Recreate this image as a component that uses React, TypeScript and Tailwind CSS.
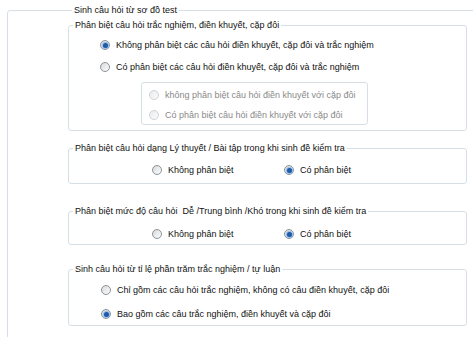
import React from 'react';

type RadioProps = { checked?: boolean; disabled?: boolean };

const Radio: React.FC<RadioProps> = ({ checked, disabled }) => {
  if (disabled) {
    return (
      <span className="w-[10px] h-[10px] shrink-0 rounded-full border border-[#cfd3d6] bg-gradient-to-br from-[#e9ebed] to-[#fbfbfb]" />
    );
  }
  return (
    <span className="w-[10px] h-[10px] shrink-0 rounded-full border border-[#8e9396] bg-gradient-to-br from-[#d6d9dc] to-[#fdfdfd] flex items-center justify-center">
      {checked && <span className="w-[5px] h-[5px] rounded-full bg-[#1d5aa8] shadow-[0_0_1px_1px_rgba(120,170,230,0.8)]" />}
    </span>
  );
};

const Option: React.FC<RadioProps & { label: string; className?: string }> = ({ label, checked, disabled, className }) => (
  <div className={`flex items-center gap-[6px] h-[12px] ${className ?? ''}`}>
    <Radio checked={checked} disabled={disabled} />
    <span className={`whitespace-pre ${disabled ? 'text-[#8a8a8a]' : 'text-[#111]'}`}>{label}</span>
  </div>
);

const Group: React.FC<{ title: string; className?: string; children: React.ReactNode }> = ({ title, className, children }) => (
  <fieldset className={`w-[399px] border border-[#d5dfe5] rounded-[3px] ${className ?? ''}`}>
    <legend className="ml-[4px] px-[2px] whitespace-pre text-[#111]">{title}</legend>
    {children}
  </fieldset>
);

export default function App() {
  return (
    <div
      className="w-[473px] h-[337px] overflow-hidden bg-white text-[9px] leading-[12px]"
      style={{ fontFamily: '"Liberation Sans", Arial, sans-serif' }}
    >
      <fieldset className="ml-[7px] mt-[4px] w-[475px] h-[345px] border border-[#d5dfe5] rounded-[3px] pl-[60px]">
        <legend className="ml-[4px] px-[2px] text-[#111]">Sinh câu hỏi từ sơ đồ test</legend>

        <Group title="Phân biệt câu hỏi trắc nghiệm, điền khuyết, cặp đôi" className="mt-[3px] pt-[8px] pb-[5px]">
          <div className="flex flex-col gap-[10px] pl-[31px]">
            <Option checked label="Không phân biệt các câu hỏi điền khuyết, cặp đôi và trắc nghiệm" />
            <Option label="Có phân biệt các câu hỏi điền khuyết, cặp đôi và trắc nghiệm" />
          </div>
          <div className="ml-[72px] mt-[9px] w-[227px] border border-[#d5dfe5] rounded-[3px] pt-[6px] pb-[3px] pl-[7px] flex flex-col gap-[8px]">
            <Option disabled label="không phân biệt câu hỏi điền khuyết với cặp đôi" />
            <Option disabled label="Có phân biệt câu hỏi điền khuyết với cặp đôi" />
          </div>
        </Group>

        <Group title="Phân biệt câu hỏi dạng Lý thuyết / Bài tập trong khi sinh đề kiểm tra" className="mt-[11px] pt-[10px] pb-[7px]">
          <div className="flex pl-[83px]">
            <Option label="Không phân biệt" className="w-[132px]" />
            <Option checked label="Có phân biệt" />
          </div>
        </Group>

        <Group title="Phân biệt mức độ câu hỏi  Dễ /Trung bình /Khó trong khi sinh đề kiểm tra" className="mt-[21px] pt-[11px] pb-[4px]">
          <div className="flex pl-[83px]">
            <Option label="Không phân biệt" className="w-[132px]" />
            <Option checked label="Có phân biệt" />
          </div>
        </Group>

        <Group title="Sinh câu hỏi từ tỉ lệ phần trăm trắc nghiệm / tự luận" className="mt-[18px] pt-[9px] pb-[5px]">
          <div className="flex flex-col gap-[12px] pl-[32px]">
            <Option label="Chỉ gồm các câu hỏi trắc nghiệm, không có câu điền khuyết, cặp đôi" />
            <Option checked label="Bao gồm các câu trắc nghiệm, điền khuyết và cặp đôi" />
          </div>
        </Group>
      </fieldset>
    </div>
  );
}
